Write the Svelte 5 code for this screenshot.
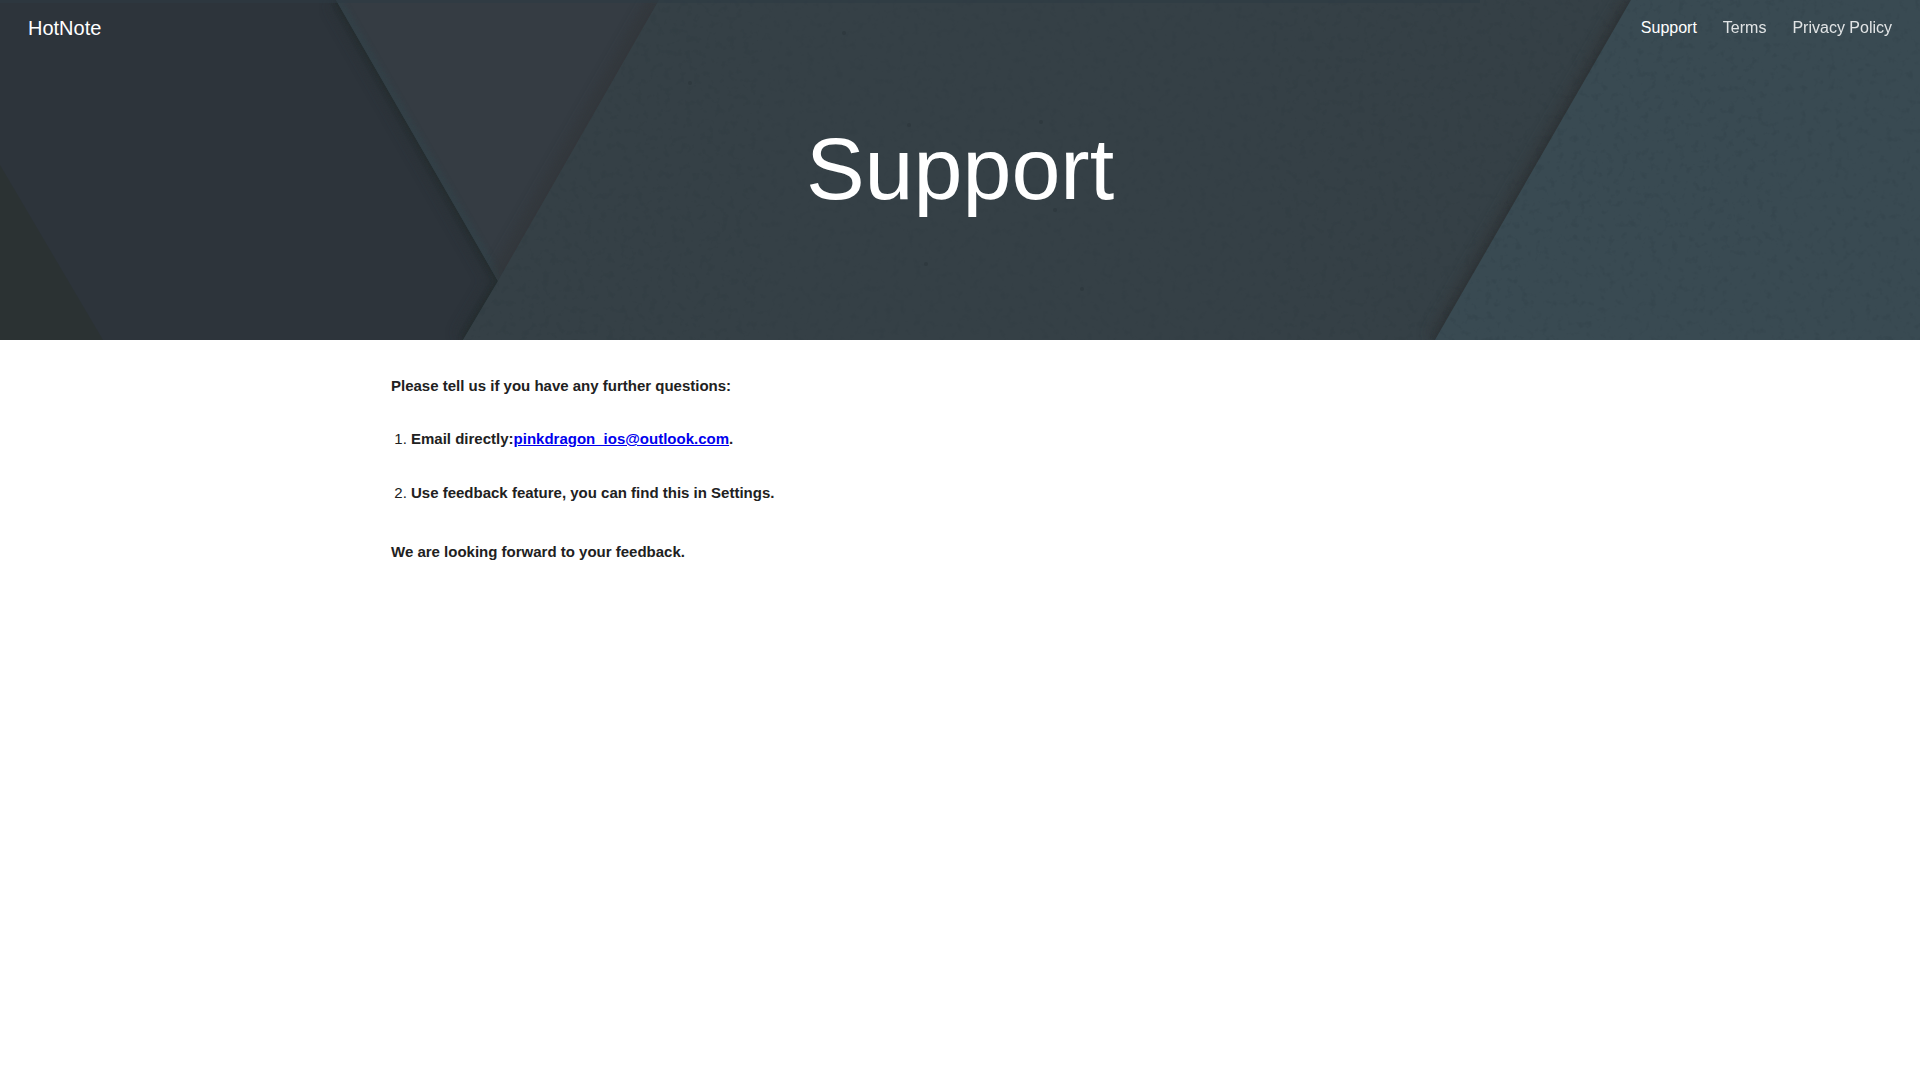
<script lang="ts">
	type NavItem = { label: string; href: string };

	const email = 'pinkdragon_ios@outlook.com';
	const nav: NavItem[] = [
		{ label: 'Support', href: '#support' },
		{ label: 'Terms', href: '#terms' },
		{ label: 'Privacy Policy', href: '#privacy-policy' }
	];

	let current: string = $state('Support');
</script>

<svelte:head>
	<title>HotNote - Support</title>
</svelte:head>

<div class="page">
	<header class="hero">
		<!-- overlapping paper sheets -->
		<svg class="paper" viewBox="0 0 1920 340" preserveAspectRatio="xMidYMid slice" aria-hidden="true">
			<defs>
				<filter id="soft" x="-10%" y="-10%" width="120%" height="120%">
					<feGaussianBlur stdDeviation="6" />
				</filter>
				<filter id="tight" x="-10%" y="-10%" width="120%" height="120%">
					<feGaussianBlur stdDeviation="2" />
				</filter>
				<filter id="grain" x="0" y="0" width="100%" height="100%" color-interpolation-filters="sRGB">
					<feTurbulence type="fractalNoise" baseFrequency="0.14" numOctaves="3" seed="8" />
					<feColorMatrix values="0 0 0 0 0.12  0 0 0 0 0.17  0 0 0 0 0.2  0 0 0 4 -2.3" />
				</filter>
				<clipPath id="leftClip"><path d="M0 0H336L498 281L463 340H0Z" /></clipPath>
				<clipPath id="wedgeClip"><path d="M336 0H659L498 281Z" /></clipPath>
				<clipPath id="middleClip"><path d="M659 0H1631L1435 340H463L498 281Z" /></clipPath>
				<clipPath id="rightClip"><path d="M1631 0H1920V340H1435Z" /></clipPath>
			</defs>
			<rect width="1920" height="340" fill="#354046" />
			<g clip-path="url(#leftClip)">
				<rect width="520" height="340" fill="#2d343b" />
				<path d="M0 165L103 340H0Z" fill="#2b3233" />
				<path d="M336 0L498 281L463 340" class="shade" filter="url(#soft)" />
				<path d="M336 0L498 281L463 340" class="edge" filter="url(#tight)" />
			</g>
			<g clip-path="url(#wedgeClip)">
				<rect x="330" width="340" height="290" fill="#353c43" />
				<path d="M336 0L498 281" class="glow" filter="url(#tight)" />
				<path d="M659 0L498 281" class="shade light" filter="url(#soft)" />
			</g>
			<g clip-path="url(#middleClip)">
				<rect x="460" width="1180" height="340" fill="#354046" />
				<path d="M1631 0L1435 340" class="shade light" filter="url(#soft)" />
				<path d="M1631 0L1435 340" class="edge light" filter="url(#tight)" />
				<rect x="460" width="1180" height="340" filter="url(#grain)" opacity="0.08" />
				<g fill="#2f393f">
					<circle cx="690" cy="83" r="2" />
					<circle cx="844" cy="33" r="2" />
					<circle cx="909" cy="125" r="2" />
					<circle cx="1041" cy="122" r="2" />
					<circle cx="1055" cy="210" r="2" />
					<circle cx="926" cy="264" r="2" />
					<circle cx="1082" cy="289" r="2" />
				</g>
			</g>
			<g clip-path="url(#rightClip)">
				<rect x="1430" width="490" height="340" fill="#394a52" />
				<rect x="1430" width="490" height="340" filter="url(#grain)" opacity="0.12" />
			</g>
			<path d="M0 1H1480" stroke="#2d3b44" stroke-width="4" opacity="0.5" />
		</svg>

		<div class="bar">
			<a class="brand" href="#home">HotNote</a>
			<nav aria-label="Site">
				{#each nav as item (item.label)}
					<a
						href={item.href}
						class:active={current === item.label}
						aria-current={current === item.label ? 'page' : undefined}
						onclick={() => (current = item.label)}>{item.label}</a>
				{/each}
			</nav>
		</div>

		<h1>Support</h1>
	</header>

	<main>
		<p>Please tell us if you have any further questions:</p>
		<ol>
			<li><strong>Email directly:<a href="mailto:{email}">{email}</a>.</strong></li>
			<li><strong>Use feedback feature, you can find this in Settings.</strong></li>
		</ol>
		<p>We are looking forward to your feedback.</p>
	</main>
</div>

<style>
	:global(body) {
		margin: 0;
		background: #fff;
	}

	.page {
		font-family: 'Liberation Sans', Arial, sans-serif;
		color: #212121;
	}

	.hero {
		position: relative;
		display: flex;
		flex-direction: column;
		color: #fff;
		background: #354046;
	}

	.paper {
		position: absolute;
		inset: 0;
		width: 100%;
		height: 100%;
	}

	.shade {
		fill: none;
		stroke: #282f31;
		stroke-width: 20;
		opacity: 0.4;
	}

	.shade.light {
		stroke: #303638;
		opacity: 0.6;
	}

	.edge {
		fill: none;
		stroke: #232a2b;
		stroke-width: 6;
		opacity: 0.6;
	}

	.edge.light {
		stroke: #2c3335;
	}

	.glow {
		fill: none;
		stroke: #30424a;
		stroke-width: 12;
		opacity: 0.6;
	}

	.bar {
		position: relative;
		display: flex;
		align-items: center;
		justify-content: space-between;
		height: 56px;
		padding: 0 28px;
	}

	.bar a {
		color: inherit;
		text-decoration: none;
	}

	.brand {
		font-size: 20px;
	}

	nav {
		display: flex;
		gap: 26px;
		font-size: 16px;
	}

	nav a {
		opacity: 0.85;
	}

	nav a.active,
	nav a:hover {
		opacity: 1;
	}

	h1 {
		position: relative;
		margin: 0;
		padding: 63px 24px 121px;
		font-size: 88px;
		font-weight: 400;
		line-height: 100px;
		text-align: center;
	}

	main {
		max-width: 1138px;
		margin: 0 auto;
		padding: 34px 24px;
		font-size: 15px;
		line-height: 24px;
	}

	p {
		margin: 0;
		font-weight: 700;
	}

	ol {
		display: flex;
		flex-direction: column;
		gap: 30px;
		margin: 29px 0 35px;
		padding-left: 20px;
	}

	main a {
		color: #0000ee;
	}
</style>
